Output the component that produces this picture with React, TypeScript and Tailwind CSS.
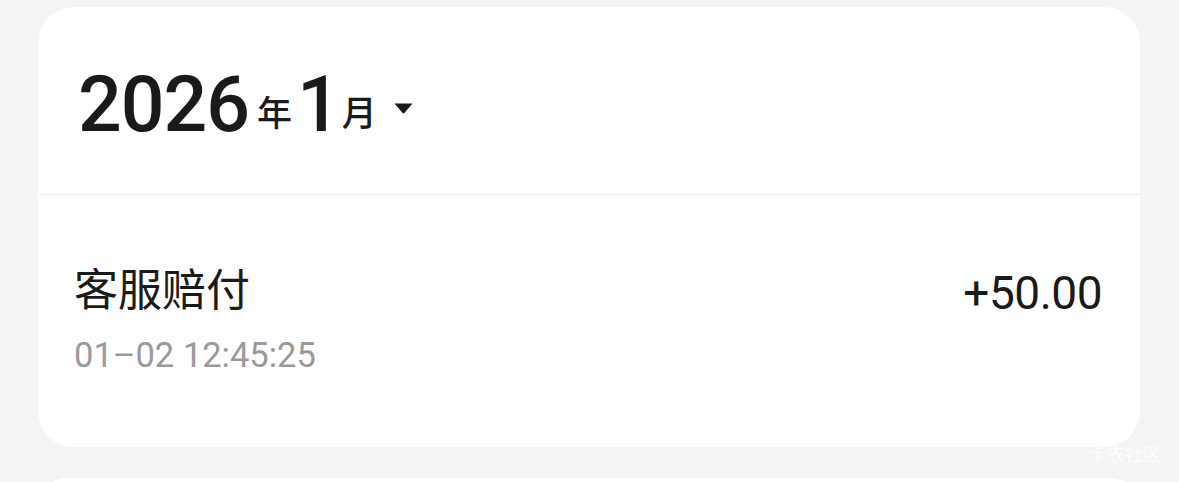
import React from "react";

const Header: React.FC = () => (
  <div className="flex h-[188px] items-center border-b border-[#ececec] pl-[40px]">
    <div className="flex items-baseline pt-[10px] text-[#1a1a1a]">
      <span className="text-[77px] font-medium leading-none tracking-[-1px]">2026</span>
      <span className="ml-[8px] -translate-y-[5px] text-[35px] font-medium leading-none">年</span>
      <span className="ml-[5px] text-[77px] font-medium leading-none tracking-[-4px]">1</span>
      <span className="ml-[5px] -translate-y-[5px] text-[35px] font-medium leading-none">月</span>
      <svg className="ml-[17px] h-[11px] w-[19px] -translate-y-[17px]" viewBox="0 0 19 11">
        <path d="M0.5 0.5 L18.5 0.5 L10.4 10.1 Q9.5 11 8.6 10.1 Z" fill="#1a1a1a" />
      </svg>
    </div>
  </div>
);

const Row: React.FC = () => (
  <div className="flex h-[252px] items-start justify-between pl-[36px] pr-[38px] pt-[68px]">
    <div className="flex flex-col">
      <span className="text-[44px] leading-[56px] text-[#1a1a1a]">客服赔付</span>
      <span className="mt-[16px] text-[34.5px] leading-[40px] text-[#9a9a9a]">01–02 12:45:25</span>
    </div>
    <span className="pt-[4px] text-[46px] leading-[52px] tracking-[-0.5px] text-[#1a1a1a]">+50.00</span>
  </div>
);

export default function App() {
  return (
    <div
      className="relative h-[482px] w-[1179px] overflow-hidden bg-[#f4f4f4] pt-[7px]"
      style={{ fontFamily: 'Roboto, "Noto Sans CJK SC", sans-serif' }}
    >
      <div className="ml-[38px] w-[1102px] rounded-[36px] bg-white">
        <Header />
        <Row />
      </div>
      <div className="ml-[38px] mt-[31px] h-[60px] w-[1102px] rounded-[36px] bg-white" />
      <span className="absolute left-[1089px] top-[441px] text-[18px] text-[#ffffff] opacity-90">
        卡农社区
      </span>
    </div>
  );
}
